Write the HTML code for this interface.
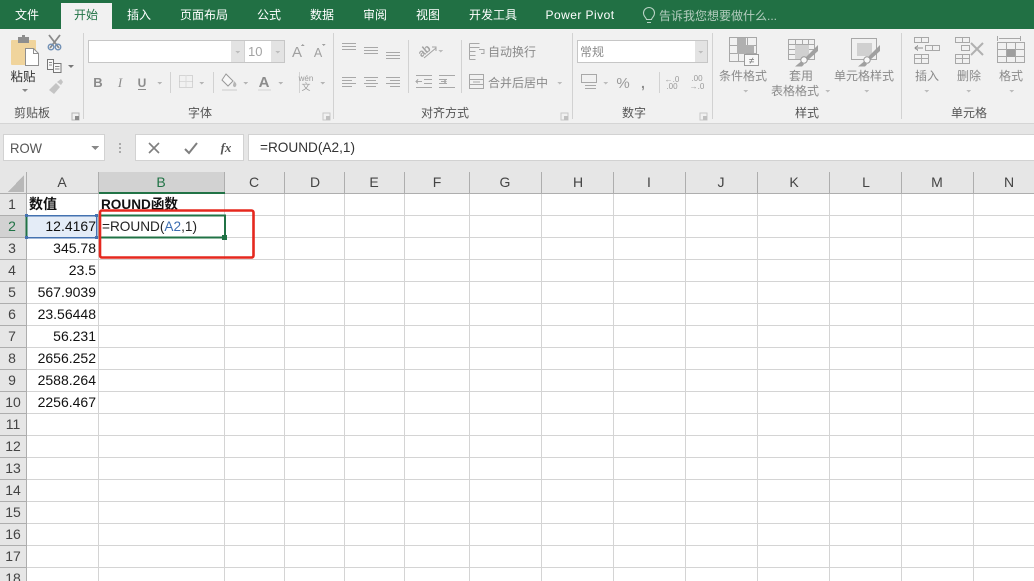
<!DOCTYPE html>
<html><head><meta charset="utf-8"><style>
html,body{margin:0;padding:0;background:#fff;overflow:hidden}
svg{display:block;position:absolute;left:0;top:0}
text{font-family:"Liberation Sans","Noto Sans CJK SC",sans-serif;font-size:12px}
.t{fill:#fff;text-anchor:middle}
.r{fill:#8a8a8a;text-anchor:middle}
.g{fill:#555;text-anchor:middle}
.ch{fill:#444;text-anchor:middle;font-size:14px}
.rh{fill:#444;text-anchor:middle;font-size:14px}
.n{fill:#111;text-anchor:end;font-size:14px}
.i{fill:none;stroke:#a8a8a8;stroke-width:1}
.f{fill:#b0b0b0}
.sep{stroke:#d2d2d2;stroke-width:1}
.gl{stroke:#d4d4d4;stroke-width:1}
.hl{stroke:#aeaeae;stroke-width:1}
</style></head><body>
<svg width="1034" height="581" viewBox="0 0 1034 581" shape-rendering="crispEdges">
<!-- title/tab bar -->
<rect width="1034" height="29" fill="#217044"/>
<rect x="61" y="3" width="51" height="26" fill="#f1f1f1"/>
<text class="t" x="27" y="19">文件</text>
<text x="86" y="19" text-anchor="middle" fill="#217346">开始</text>
<text class="t" x="139" y="19">插入</text>
<text class="t" x="204" y="19">页面布局</text>
<text class="t" x="269" y="19">公式</text>
<text class="t" x="322" y="19">数据</text>
<text class="t" x="375" y="19">审阅</text>
<text class="t" x="428" y="19">视图</text>
<text class="t" x="493" y="19">开发工具</text>
<text class="t" x="580" y="19" style="letter-spacing:.45px">Power Pivot</text>
<g shape-rendering="auto"><path d="M647 22.500h4M646.500 19.500c-.2-1.800-3-3-3-6.500a5.500 5.500 0 0 1 11 0c0 3.500-2.800 4.700-3 6.500z" fill="none" stroke="#b9d3c5" stroke-width="1.100"/></g>
<text x="659" y="20" fill="#b4cdbf">告诉我您想要做什么...</text>

<!-- ribbon -->
<rect y="29" width="1034" height="94" fill="#f1f1f1"/>
<rect y="123" width="1034" height="1" fill="#d5d5d5"/>
<rect y="124" width="1034" height="48" fill="#e6e6e6"/>
<line class="sep" x1="83.500" y1="33" x2="83.500" y2="119"/>
<line class="sep" x1="333.500" y1="33" x2="333.500" y2="119"/>
<line class="sep" x1="572.500" y1="33" x2="572.500" y2="119"/>
<line class="sep" x1="712.500" y1="33" x2="712.500" y2="119"/>
<line class="sep" x1="901.500" y1="33" x2="901.500" y2="119"/>
<line class="sep" x1="408.500" y1="40" x2="408.500" y2="93"/>
<line class="sep" x1="461.500" y1="40" x2="461.500" y2="93"/>

<!-- clipboard -->
<g shape-rendering="auto">
<rect x="11" y="40" width="25" height="25" rx="1" fill="#f0d49c"/>
<rect x="18" y="37" width="11" height="6" fill="#8e8e8e"/>
<rect x="22" y="35" width="3" height="3" fill="#8e8e8e"/>
<path d="M25.500 48.500h8l5 5v12h-13z" fill="#fff" stroke="#8f8f8f"/>
<path d="M33.500 48.500v5h5" fill="none" stroke="#8f8f8f"/>
<path d="M49 35l10 13M60 35l-10 13" stroke="#8a8a8a" stroke-width="1.800" fill="none"/>
<circle cx="51" cy="47" r="2.800" fill="none" stroke="#6f8fb5" stroke-width="1.300"/>
<circle cx="58" cy="47" r="2.800" fill="none" stroke="#6f8fb5" stroke-width="1.300"/>
<path d="M47.500 59.500h6v10h-6zM53.500 63.500h7.500v9h-7.500z" fill="#f8f8f8" stroke="#777"/>
<path d="M55 66.500h4.500M55 69h4.500M49 62.500h3M49 65h3" stroke="#888" fill="none"/>
<path d="M68 65h6l-3 3z" fill="#777"/>
<path d="M49 90l7-7 4 4-6 7zM57 82l4-3 2 3-2 3z" fill="#c4c4c4"/>
<path d="M22 89h6l-3 3z" fill="#888"/>
</g>
<text x="23" y="81" text-anchor="middle" fill="#333" style="font-size:12.500px">粘贴</text>
<text class="g" x="32" y="117">剪贴板</text>
<path d="M72 113h7v7h-7z" fill="none" stroke="#b5b5b5"/><path d="M75 116h4v4h-4z" fill="#8c8c8c"/>

<!-- font -->
<rect x="88.500" y="40.500" width="196" height="22" fill="#fff" stroke="#c6c6c6"/>
<rect x="231" y="41" width="13" height="21" fill="#e3e3e3"/>
<rect x="271" y="41" width="13" height="21" fill="#e3e3e3"/>
<line class="sep" x1="244.500" y1="41" x2="244.500" y2="62"/>
<path d="M235 51h5l-2.500 2.500zM275 51h5l-2.500 2.500z" fill="#bdbdbd"/>
<text x="248" y="56" fill="#a3a3a3" style="font-size:13px">10</text>
<text x="297" y="57" text-anchor="middle" fill="#a0a0a0" style="font-size:15px">A</text>
<text x="318" y="57" text-anchor="middle" fill="#a0a0a0" style="font-size:12.500px">A</text>
<path d="M301 46h3.500l-1.750-2zM322 44h3.500l-1.750 2z" fill="#a0a0a0"/>
<text x="98" y="87" text-anchor="middle" fill="#8c8c8c" style="font-weight:bold;font-size:13px">B</text>
<text x="120" y="87" text-anchor="middle" fill="#8c8c8c" style="font-style:italic;font-family:'Liberation Serif',serif;font-size:13px">I</text>
<text x="142" y="87" text-anchor="middle" fill="#8c8c8c" style="font-weight:bold;font-size:12px">U</text>
<rect x="138" y="89" width="8" height="1" fill="#8c8c8c"/>
<path d="M157 82h5l-2.500 2.500zM199 82h5l-2.500 2.500zM243 82h5l-2.500 2.500zM278 82h5l-2.500 2.500zM320 82h5l-2.500 2.500z" fill="#b5b5b5"/>
<line class="sep" x1="170.500" y1="72" x2="170.500" y2="93"/>
<line class="sep" x1="213.500" y1="72" x2="213.500" y2="93"/>
<line class="sep" x1="299.500" y1="72" x2="299.500" y2="93"/>
<rect x="179.500" y="75.500" width="13" height="12" fill="none" stroke="#b8b8b8" stroke-dasharray="1 1"/>
<path d="M186 75.500v12M179.500 81.500h13" stroke="#c4c4c4" stroke-dasharray="1 1"/>
<g shape-rendering="auto"><path d="M226 74l7 7-5 5-6-6z" fill="#f7f7f7" stroke="#999"/><path d="M234 81c2 2 3 3 2 5s-3 1-3-1z" fill="#b5b5b5"/></g>
<rect x="222" y="89" width="15" height="2" fill="#dedede"/>
<text x="264" y="87" text-anchor="middle" fill="#8c8c8c" style="font-weight:bold;font-size:15px">A</text>
<rect x="258" y="89" width="13" height="2" fill="#e2e2e2"/>
<text x="306" y="81" text-anchor="middle" fill="#9a9a9a" style="font-size:8px">wén</text>
<text x="306" y="90" text-anchor="middle" fill="#9a9a9a" style="font-size:9px">文</text>
<text class="g" x="200" y="117">字体</text>
<path d="M323 113h7v7h-7z" fill="none" stroke="#c8c8c8"/><path d="M326 116h4v4h-4z" fill="#c0c0c0"/>

<!-- alignment -->
<path d="M342 43.500h14M342 46.500h14M342 49.500h14M364 47.500h14M364 50.500h14M364 53.500h14M386 52.500h14M386 55.500h14M386 58.500h14" class="i"/>
<path d="M342 77.500h14M342 80.500h10M342 83.500h14M342 86.500h10M364 77.500h14M366 80.500h10M364 83.500h14M366 86.500h10M386 77.500h14M390 80.500h10M386 83.500h14M390 86.500h10" class="i"/>
<g shape-rendering="auto"><text x="417" y="55" fill="#a2a2a2" transform="rotate(-40 423 50)" style="font-size:11px;font-weight:bold">ab</text><path d="M424 58l12-10M432 47h4v4" stroke="#a2a2a2" fill="none"/></g>
<path d="M438 50h5l-2.500 2.500z" fill="#bdbdbd"/>
<path d="M416 75.500h16M424 79.500h8M424 83.500h8M416 87.500h16M439 75.500h16M439 79.500h8M439 83.500h8M439 87.500h16" class="i"/>
<path d="M416 81.500h6M418 79.500l-2 2 2 2M441 81.500h5M444 79.500l2 2-2 2" class="i"/>
<path d="M469.500 43.500h10M469.500 47.500h10M469.500 51.500h6M469.500 55.500h6M469.500 59.500h6M469.500 43.500v16M479 49.500h5v4h-3" class="i"/>
<text x="488" y="56" fill="#8a8a8a">自动换行</text>
<rect x="469.500" y="74.500" width="14" height="14" class="i"/>
<path d="M469.500 79.500h14M469.500 84.500h14M473 82h7" class="i"/>
<text x="488" y="87" fill="#8a8a8a">合并后居中</text>
<path d="M557 82h5l-2.500 2.500z" fill="#bdbdbd"/>
<text class="g" x="445" y="117">对齐方式</text>
<path d="M561 113h7v7h-7z" fill="none" stroke="#c8c8c8"/><path d="M564 116h4v4h-4z" fill="#c0c0c0"/>

<!-- number -->
<rect x="577.500" y="40.500" width="130" height="22" fill="#fff" stroke="#c6c6c6"/>
<rect x="695" y="41" width="12" height="21" fill="#e3e3e3"/>
<path d="M698 51h5l-2.500 2.500z" fill="#bdbdbd"/>
<text x="580" y="56" fill="#8a8a8a">常规</text>
<rect x="581.500" y="74.500" width="15" height="8" class="i"/>
<path d="M585 85.500h11M585 88.500h11" class="i"/>
<path d="M603 82h5l-2.500 2.500z" fill="#bdbdbd"/>
<text x="623" y="88" text-anchor="middle" fill="#9a9a9a" style="font-size:15px">%</text>
<text x="643" y="88" text-anchor="middle" fill="#8c8c8c" style="font-size:14px;font-weight:bold">,</text>
<line class="sep" x1="659.500" y1="72" x2="659.500" y2="93"/>
<text x="672" y="82" text-anchor="middle" fill="#9a9a9a" style="font-size:8px">←.0</text>
<text x="672" y="89" text-anchor="middle" fill="#9a9a9a" style="font-size:8px">.00</text>
<text x="697" y="81" text-anchor="middle" fill="#9a9a9a" style="font-size:8px">.00</text>
<text x="697" y="89" text-anchor="middle" fill="#9a9a9a" style="font-size:8px">→.0</text>
<text class="g" x="634" y="117">数字</text>
<path d="M700 113h7v7h-7z" fill="none" stroke="#c8c8c8"/><path d="M703 116h4v4h-4z" fill="#c0c0c0"/>

<!-- styles -->
<rect x="729.500" y="37.500" width="27" height="24" class="i"/>
<path d="M729.500 45.500h27M729.500 53.500h27M738.500 37.500v24M747.500 37.500v24" class="i"/>
<rect x="737" y="38" width="9" height="16" class="f"/><rect x="746" y="45" width="8" height="8" class="f"/>
<rect x="744.500" y="54.500" width="14" height="11" fill="#f8f8f8" stroke="#9c9c9c"/>
<text x="751.500" y="64" text-anchor="middle" fill="#777" style="font-size:10px">≠</text>
<text class="r" x="743" y="80">条件格式</text>
<path d="M743 90h5l-2.500 2.500z" fill="#bdbdbd"/>
<rect x="788.500" y="39.500" width="26" height="20" class="i"/>
<path d="M788.500 44.500h26M788.500 49.500h26M788.500 54.500h26M795.500 39.500v20M802.500 39.500v20M808.500 39.500v20" class="i"/>
<rect x="795" y="45" width="14" height="14" fill="#d0d0d0"/>
<g shape-rendering="auto"><path d="M818 45l-14 14 3 2 11-10z" fill="#a0a0a0"/><circle cx="804" cy="60" r="3.200" fill="#f8f8f8" stroke="#999"/><path d="M795 66.500l6-5 3 3-2 2z" fill="#a0a0a0"/></g>
<text class="r" x="801" y="80">套用</text>
<text class="r" x="795" y="95">表格格式</text>
<path d="M825 90h5l-2.500 2.500z" fill="#bdbdbd"/>
<rect x="851.500" y="38.500" width="25" height="21" class="i"/>
<rect x="857" y="43" width="15" height="13" fill="#d0d0d0"/>
<g shape-rendering="auto"><path d="M880 45l-14 14 3 2 11-10z" fill="#a0a0a0"/><circle cx="867" cy="60" r="3.200" fill="#f8f8f8" stroke="#999"/><path d="M858 66.500l6-5 3 3-2 2z" fill="#a0a0a0"/></g>
<text class="r" x="864" y="80">单元格样式</text>
<path d="M864 90h5l-2.500 2.500z" fill="#bdbdbd"/>
<text class="g" x="807" y="117">样式</text>

<!-- cells -->
<path d="M914.500 37.500h14v5h-14zM921.500 37.500v5M914.500 54.500h14v9h-14zM914.500 58.500h14M921.500 54.500v9M925.500 45.500h14v5h-14zM932.500 45.500v5" class="i"/>
<path d="M915 48h8M918 45.500l-3 2.500 3 2.500" stroke="#8f8f8f" fill="none"/>
<text class="r" x="927" y="80">插入</text>
<path d="M924 90h5l-2.500 2.500z" fill="#bdbdbd"/>
<path d="M955.500 37.500h14v5h-14zM962.500 37.500v5M955.500 54.500h14v9h-14zM955.500 58.500h14M962.500 54.500v9M961.500 45.500h8v5h-8z" class="i"/>
<g shape-rendering="auto"><path d="M971 43l12 12M983 43l-12 12" stroke="#b0b0b0" stroke-width="2" fill="none"/></g>
<text class="r" x="969" y="80">删除</text>
<path d="M966 90h5l-2.500 2.500z" fill="#bdbdbd"/>
<path d="M997.500 42.500h27v20h-27zM997.500 49.500h27M997.500 56.500h27M1006.500 42.500v20M1015.500 42.500v20M997.500 36v5M1020.500 36v5M999 38.500h21" class="i"/>
<rect x="1007" y="49" width="8" height="8" fill="#9e9e9e"/>
<text class="r" x="1011" y="80">格式</text>
<path d="M1009 90h5l-2.500 2.500z" fill="#bdbdbd"/>
<text class="g" x="969" y="117">单元格</text>

<!-- formula bar -->
<rect x="3.500" y="134.500" width="101" height="26" fill="#fff" stroke="#d2d2d2"/>
<text x="10" y="153" fill="#555" textLength="32" lengthAdjust="spacingAndGlyphs" style="font-size:14px">ROW</text>
<path d="M91 146h8l-4 4z" fill="#888"/>
<rect x="119" y="143" width="2" height="2" fill="#aaa"/><rect x="119" y="147" width="2" height="2" fill="#aaa"/><rect x="119" y="151" width="2" height="2" fill="#aaa"/>
<rect x="135.500" y="134.500" width="108" height="26" fill="#fff" stroke="#d2d2d2"/>
<rect x="248.500" y="134.500" width="790" height="26" fill="#fff" stroke="#d2d2d2"/>
<g shape-rendering="auto">
<path d="M149 143l10 10M159 143l-10 10" stroke="#7f7f7f" stroke-width="1.600" fill="none"/>
<path d="M185 149l4 4 8-10" stroke="#7f7f7f" stroke-width="2" fill="none"/>
</g>
<text x="226" y="152" text-anchor="middle" fill="#555" style="font-family:'Liberation Serif',serif;font-style:italic;font-weight:bold;font-size:13px">fx</text>
<text x="260" y="152" fill="#333" textLength="95" lengthAdjust="spacingAndGlyphs" style="font-size:14px">=ROUND(A2,1)</text>

<!-- headers -->
<rect y="172" width="1034" height="22" fill="#e6e6e6"/>
<rect y="194" width="26" height="387" fill="#e6e6e6"/>
<path d="M24 175v17H8z" fill="#b8b8b8"/>
<rect x="99" y="172" width="126" height="21" fill="#d2d2d2"/>
<rect x="0" y="216" width="26" height="21" fill="#d2d2d2"/>
<!-- grid -->
<g class="gl">
<line class="gl" x1="26" x2="1034" y1="215.500" y2="215.500"/><line class="gl" x1="26" x2="1034" y1="237.500" y2="237.500"/><line class="gl" x1="26" x2="1034" y1="259.500" y2="259.500"/><line class="gl" x1="26" x2="1034" y1="281.500" y2="281.500"/><line class="gl" x1="26" x2="1034" y1="303.500" y2="303.500"/><line class="gl" x1="26" x2="1034" y1="325.500" y2="325.500"/><line class="gl" x1="26" x2="1034" y1="347.500" y2="347.500"/><line class="gl" x1="26" x2="1034" y1="369.500" y2="369.500"/><line class="gl" x1="26" x2="1034" y1="391.500" y2="391.500"/><line class="gl" x1="26" x2="1034" y1="413.500" y2="413.500"/><line class="gl" x1="26" x2="1034" y1="435.500" y2="435.500"/><line class="gl" x1="26" x2="1034" y1="457.500" y2="457.500"/><line class="gl" x1="26" x2="1034" y1="479.500" y2="479.500"/><line class="gl" x1="26" x2="1034" y1="501.500" y2="501.500"/><line class="gl" x1="26" x2="1034" y1="523.500" y2="523.500"/><line class="gl" x1="26" x2="1034" y1="545.500" y2="545.500"/><line class="gl" x1="26" x2="1034" y1="567.500" y2="567.500"/>
<line class="gl" y1="194" y2="581" x1="98.500" x2="98.500"/><line class="gl" y1="194" y2="581" x1="224.500" x2="224.500"/><line class="gl" y1="194" y2="581" x1="284.500" x2="284.500"/><line class="gl" y1="194" y2="581" x1="344.500" x2="344.500"/><line class="gl" y1="194" y2="581" x1="404.500" x2="404.500"/><line class="gl" y1="194" y2="581" x1="469.500" x2="469.500"/><line class="gl" y1="194" y2="581" x1="541.500" x2="541.500"/><line class="gl" y1="194" y2="581" x1="613.500" x2="613.500"/><line class="gl" y1="194" y2="581" x1="685.500" x2="685.500"/><line class="gl" y1="194" y2="581" x1="757.500" x2="757.500"/><line class="gl" y1="194" y2="581" x1="829.500" x2="829.500"/><line class="gl" y1="194" y2="581" x1="901.500" x2="901.500"/><line class="gl" y1="194" y2="581" x1="973.500" x2="973.500"/>
</g>
<!-- header separators -->
<line class="hl" x1="0" x2="1034" y1="193.500" y2="193.500"/>
<line class="hl" x1="26.500" x2="26.500" y1="172" y2="581"/>
<line class="hl" x1="98.500" x2="98.500" y1="172" y2="193"/><line class="hl" x1="224.500" x2="224.500" y1="172" y2="193"/><line class="hl" x1="284.500" x2="284.500" y1="172" y2="193"/><line class="hl" x1="344.500" x2="344.500" y1="172" y2="193"/><line class="hl" x1="404.500" x2="404.500" y1="172" y2="193"/><line class="hl" x1="469.500" x2="469.500" y1="172" y2="193"/><line class="hl" x1="541.500" x2="541.500" y1="172" y2="193"/><line class="hl" x1="613.500" x2="613.500" y1="172" y2="193"/><line class="hl" x1="685.500" x2="685.500" y1="172" y2="193"/><line class="hl" x1="757.500" x2="757.500" y1="172" y2="193"/><line class="hl" x1="829.500" x2="829.500" y1="172" y2="193"/><line class="hl" x1="901.500" x2="901.500" y1="172" y2="193"/><line class="hl" x1="973.500" x2="973.500" y1="172" y2="193"/>
<path d="M0 215.500h26M0 237.500h26M0 259.500h26M0 281.500h26M0 303.500h26M0 325.500h26M0 347.500h26M0 369.500h26M0 391.500h26M0 413.500h26M0 435.500h26M0 457.500h26M0 479.500h26M0 501.500h26M0 523.500h26M0 545.500h26M0 567.500h26" stroke="#aeaeae"/>
<rect x="99" y="192" width="126" height="2" fill="#217346"/>

<text class="ch" x="62" y="187">A</text><text class="ch" x="161" y="187" style="fill:#217346">B</text><text class="ch" x="254" y="187">C</text><text class="ch" x="315" y="187">D</text><text class="ch" x="374" y="187">E</text><text class="ch" x="437" y="187">F</text><text class="ch" x="505" y="187">G</text><text class="ch" x="578" y="187">H</text><text class="ch" x="649" y="187">I</text><text class="ch" x="721" y="187">J</text><text class="ch" x="794" y="187">K</text><text class="ch" x="866" y="187">L</text><text class="ch" x="937" y="187">M</text><text class="ch" x="1009" y="187">N</text>

<text class="rh" x="12" y="209">1</text><text class="rh" x="12" y="231" style="fill:#217346">2</text><text class="rh" x="12" y="253">3</text><text class="rh" x="12" y="275">4</text><text class="rh" x="12" y="297">5</text><text class="rh" x="12" y="319">6</text><text class="rh" x="12" y="341">7</text><text class="rh" x="12" y="363">8</text><text class="rh" x="12" y="385">9</text><text class="rh" x="13" y="407">10</text><text class="rh" x="13" y="429">11</text><text class="rh" x="13" y="451">12</text><text class="rh" x="13" y="473">13</text><text class="rh" x="13" y="495">14</text><text class="rh" x="13" y="517">15</text><text class="rh" x="13" y="539">16</text><text class="rh" x="13" y="561">17</text><text class="rh" x="13" y="583">18</text>

<!-- A2 range highlight -->
<rect x="27" y="216" width="70" height="21" fill="#e4ecf7"/>
<rect x="26.500" y="215.500" width="70" height="22" fill="none" stroke="#4472b0" stroke-width="1.500"/>
<path d="M26.500 215.500v22" stroke="#217346" stroke-width="2"/>
<rect x="25" y="214" width="3" height="3" fill="#4472b0"/><rect x="95" y="214" width="3" height="3" fill="#4472b0"/><rect x="25" y="236" width="3" height="3" fill="#4472b0"/><rect x="95" y="236" width="3" height="3" fill="#4472b0"/>

<!-- cell text -->
<text x="29" y="209" fill="#111" style="font-size:14px;font-weight:bold">数值</text>
<text x="101" y="209" fill="#111" textLength="77" lengthAdjust="spacingAndGlyphs" style="font-size:14px;font-weight:bold">ROUND函数</text>
<text class="n" x="96" y="231">12.4167</text>
<text class="n" x="96" y="253">345.78</text>
<text class="n" x="96" y="275">23.5</text>
<text class="n" x="96" y="297">567.9039</text>
<text class="n" x="96" y="319">23.56448</text>
<text class="n" x="96" y="341">56.231</text>
<text class="n" x="96" y="363">2656.252</text>
<text class="n" x="96" y="385">2588.264</text>
<text class="n" x="96" y="407">2256.467</text>

<!-- active cell -->
<rect x="99" y="215" width="126" height="23" fill="#fff"/>
<rect x="99.500" y="215.500" width="125.500" height="22" fill="none" stroke="#217346" stroke-width="2"/>
<rect x="222" y="235" width="5" height="5" fill="#217346"/>
<text x="102" y="231" fill="#222" textLength="95" lengthAdjust="spacingAndGlyphs" style="font-size:14px">=ROUND(<tspan fill="#3c6db0">A2</tspan>,1)</text>

<!-- red annotation -->
<g shape-rendering="auto"><rect x="100" y="210.500" width="153.500" height="47" rx="2" fill="none" stroke="#e5281e" stroke-width="2.600"/></g>
</svg>
</body></html>
